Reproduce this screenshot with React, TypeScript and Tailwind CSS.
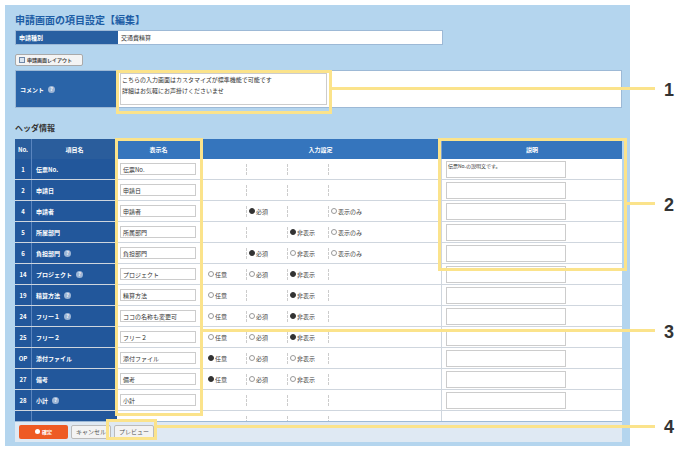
const font = { fontFamily: '"Noto Sans CJK JP", "Noto Sans", sans-serif' };

type R = { no: string; name: string; disp: string; help?: boolean; opts: (null | [string, boolean])[]; desc?: string };

const rows: R[] = [
  { no: "1", name: "伝票No.", disp: "伝票No.", opts: [null, null, null, null], desc: "伝票No.の説明文です。" },
  { no: "2", name: "申請日", disp: "申請日", opts: [null, null, null, null] },
  { no: "4", name: "申請者", disp: "申請者", opts: [null, ["必須", true], null, ["表示のみ", false]] },
  { no: "5", name: "所属部門", disp: "所属部門", opts: [null, null, ["非表示", true], ["表示のみ", false]] },
  { no: "6", name: "負担部門", disp: "負担部門", help: true, opts: [null, ["必須", true], ["非表示", false], ["表示のみ", false]] },
  { no: "14", name: "プロジェクト", disp: "プロジェクト", help: true, opts: [["任意", false], ["必須", false], ["非表示", true], null] },
  { no: "19", name: "精算方法", disp: "精算方法", help: true, opts: [["任意", false], null, ["非表示", true], null] },
  { no: "24", name: "フリー１", disp: "ココの名称も変更可", help: true, opts: [["任意", false], ["必須", false], ["非表示", true], null] },
  { no: "25", name: "フリー２", disp: "フリー２", opts: [["任意", false], ["必須", false], ["非表示", true], null] },
  { no: "OP", name: "添付ファイル", disp: "添付ファイル", opts: [["任意", true], ["必須", false], ["非表示", false], null] },
  { no: "27", name: "備考", disp: "備考", opts: [["任意", true], ["必須", false], ["非表示", false], null] },
  { no: "28", name: "小計", disp: "小計", help: true, opts: [null, null, null, null] },
];

const Help = () => (
  <span className="ml-1 inline-flex h-[7px] w-[7px] items-center justify-center rounded-full bg-[#9db6d6] text-[5px] text-white">?</span>
);

const Radio = ({ on, label }: { on: boolean; label: string }) => (
  <span className="flex items-center text-[6px] text-[#444]">
    <span className={`mr-[1px] h-[6px] w-[6px] rounded-full border ${on ? "border-[#333] bg-[#333]" : "border-[#999] bg-white"}`} />
    {label}
  </span>
);

const Callout = ({ cls }: { cls: string }) => (
  <div className={`absolute border-[3px] border-[#fbe38b] ${cls}`} />
);

export default function App() {
  return (
    <div className="relative h-[449px] w-[690px] overflow-hidden bg-white" style={font}>
      <div className="absolute left-[5px] top-[5px] flex h-[441px] w-[625px] flex-col bg-[#b4d5ee] px-[10px]">
        <div className="pt-[7px] text-[10px] font-bold text-[#1d5da5]">申請画面の項目設定【編集】</div>
        <div className="mt-[3px] flex h-[15px] w-[428px] border border-[#9db9d6]">
          <div className="flex w-[102px] items-center bg-[#285fa1] pl-[3px] text-[6px] font-bold text-white">申請種別</div>
          <div className="flex flex-1 items-center bg-white pl-[3px] text-[6px] text-[#333]">交通費精算</div>
        </div>
        <div className="mt-[9px] flex h-[13px] w-[68px] items-center gap-[2px] rounded-[2px] border border-[#aaa] bg-[#f4f4f4] px-[3px] text-[5px] font-bold text-[#444]">
          <span className="h-[6px] w-[6px] border border-[#6f88a8] bg-[#dbe5f0]" />申請画面レイアウト
        </div>
        <div className="mt-[4px] flex h-[38px] w-[607px] border border-[#9db9d6]">
          <div className="flex w-[102px] items-center bg-[#2a64a8] pl-[4px] text-[6px] font-bold text-white">コメント<Help /></div>
          <div className="flex-1 bg-white p-[2px]">
            <div className="h-[32px] w-[207px] border border-[#ccc] px-[1px] text-[6px] leading-[11px] text-[#333]">
              こちらの入力画面はカスタマイズが標準機能で可能です<br />詳細はお気軽にお声掛けくださいませ
            </div>
          </div>
        </div>
        <div className="mt-[14px] text-[8px] font-bold text-[#333]">ヘッダ情報</div>
        <div className="mt-[5px] w-[607px] overflow-hidden">
          <div className="flex h-[20px] text-[6px] font-bold text-white">
            <div className="flex w-[17px] items-center justify-center border-r border-[#5a85bf] bg-[#2a5d9c]">No.</div>
            <div className="flex w-[85px] items-center justify-center bg-[#2a5d9c]">項目名</div>
            <div className="flex w-[83px] items-center justify-center bg-[#3575bd]">表示名</div>
            <div className="flex w-[241px] items-center justify-center bg-[#3575bd]">入力設定</div>
            <div className="flex flex-1 items-center justify-center border-l border-[#7da2d0] bg-[#3575bd]">説明</div>
          </div>
          {[...rows, null].map((r, i) => (
            <div key={i} className="flex h-[21px] border-b border-[#cfd6de] text-[6px]">
              <div className="flex w-[17px] items-center justify-center border-r border-[#5a85bf] bg-[#22579b] font-bold text-white">{r?.no}</div>
              <div className="flex w-[85px] items-center bg-[#22579b] pl-[4px] font-bold text-white">{r?.name}{r?.help && <Help />}</div>
              <div className="flex w-[83px] items-center bg-white pl-[3px]">
                {r && <div className="flex h-[12px] w-[76px] items-center border border-[#ccc] pl-[2px] text-[#333]">{r.disp}</div>}
              </div>
              <div className="flex w-[241px] items-center bg-white pl-[6px]">
                {(r?.opts ?? [null, null, null, null]).map((o, j) => (
                  <div key={j} className={`flex h-[11px] w-[41px] items-center pl-[2px] ${j < 3 ? "border-r border-dashed border-[#ccc]" : ""}`}>
                    {o && <Radio label={o[0]} on={o[1]} />}
                  </div>
                ))}
              </div>
              <div className="flex flex-1 items-center border-l border-[#cfd6de] bg-white pl-[4px]">
                {r && <div className="h-[17px] w-[120px] border border-[#ccc] px-[1px] text-[5px] leading-[8px] text-[#333]">{r.desc}</div>}
              </div>
            </div>
          ))}
        </div>
        <div className="mt-auto mb-[4px] flex h-[22px] w-[607px] items-center gap-[3px] border-t border-[#9db9d6] bg-[#dfe9f3] pl-[4px] -mx-[0px]">
          <div className="flex h-[14px] w-[49px] items-center justify-center gap-[2px] rounded-[2px] bg-[#ee5a23] text-[5px] font-bold text-white">
            <span className="h-[5px] w-[5px] rounded-full bg-white" />確定
          </div>
          <div className="flex h-[14px] w-[40px] items-center justify-center rounded-[2px] border border-[#bbb] bg-[#f3f3f3] text-[6px] text-[#555]">キャンセル</div>
          <div className="flex h-[14px] w-[40px] items-center justify-center rounded-[2px] border border-[#bbb] bg-[#f3f3f3] text-[6px] text-[#555]">プレビュー</div>
        </div>
      </div>
      <Callout cls="left-[116px] top-[70px] h-[44px] w-[216px]" />
      <Callout cls="left-[438px] top-[138px] h-[133px] w-[189px]" />
      <Callout cls="left-[115px] top-[138px] h-[278px] w-[88px]" />
      <Callout cls="left-[106px] top-[419px] h-[21px] w-[51px]" />
      <div className="absolute left-[331px] top-[87px] h-[3px] w-[324px] bg-[#fbe38b]" />
      <div className="absolute left-[626px] top-[202px] h-[3px] w-[29px] bg-[#fbe38b]" />
      <div className="absolute left-[203px] top-[329px] h-[3px] w-[452px] bg-[#fbe38b]" />
      <div className="absolute left-[156px] top-[425px] h-[3px] w-[499px] bg-[#fbe38b]" />
      {[["1", 77], ["2", 192], ["3", 319], ["4", 414]].map(([n, t]) => (
        <div key={n} className="absolute left-[664px] text-[18px] font-bold text-[#333]" style={{ top: t as number, fontFamily: '"Liberation Sans", sans-serif' }}>{n}</div>
      ))}
    </div>
  );
}
